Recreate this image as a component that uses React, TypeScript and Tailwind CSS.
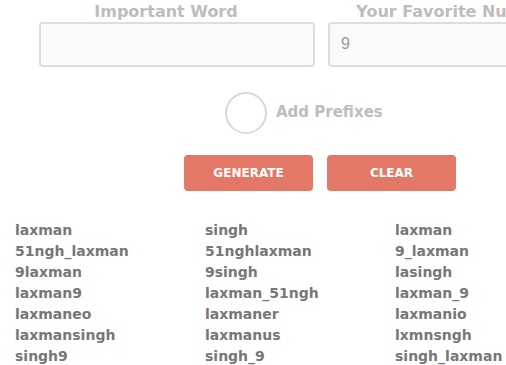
const words: string[][] = [
  ["laxman", "singh", "laxman"],
  ["51ngh_laxman", "51nghlaxman", "9_laxman"],
  ["9laxman", "9singh", "lasingh"],
  ["laxman9", "laxman_51ngh", "laxman_9"],
  ["laxmaneo", "laxmaner", "laxmanio"],
  ["laxmansingh", "laxmanus", "lxmnsngh"],
  ["singh9", "singh_9", "singh_laxman"],
];

function Field({ label, value }: { label: string; value?: string }) {
  return (
    <div className="flex flex-col w-[276px] shrink-0">
      <div className="pr-[22px] text-center text-[16px] leading-5 font-bold text-[#bdbdbd] whitespace-nowrap">
        {label}
      </div>
      <div className="h-[45px] rounded-[4px] border-2 border-[#dddddd] bg-[#fafafa] flex items-center px-[11px] text-[16px] text-[#999999] font-['Liberation_Sans',Arial,sans-serif]">
        {value}
      </div>
    </div>
  );
}

export default function App() {
  return (
    <div className="w-[506px] h-[365px] overflow-hidden bg-white font-['DejaVu_Sans',Verdana,sans-serif]">
      <div className="w-[660px] flex flex-col">
        <div className="flex gap-[13px] pl-[39px] pt-[1.5px]">
          <Field label="Important Word" />
          <Field label="Your Favorite Number" value="9" />
        </div>

        <div className="flex items-center gap-[9px] pl-[225px] mt-[25px]">
          <div className="w-[42px] h-[42px] rounded-full border-2 border-[#d8d8d8]" />
          <span className="text-[15px] font-bold text-[#bdbdbd]">Add Prefixes</span>
        </div>

        <div className="flex gap-[14px] pl-[184px] mt-[21px]">
          <button className="w-[129px] h-[36px] rounded-[4px] bg-[#e37866] text-white text-[12px] font-bold">
            GENERATE
          </button>
          <button className="w-[129px] h-[36px] rounded-[4px] bg-[#e37866] text-white text-[12px] font-bold">
            CLEAR
          </button>
        </div>

        <div className="mt-[29px] pl-[15px] grid grid-cols-[190px_190px_190px]">
          {words.map((row, i) =>
            row.map((w, j) => (
              <div
                key={`${i}-${j}`}
                className="text-[14px] leading-[21px] font-bold text-[#777777] whitespace-nowrap"
              >
                {w}
              </div>
            ))
          )}
        </div>
      </div>
    </div>
  );
}
